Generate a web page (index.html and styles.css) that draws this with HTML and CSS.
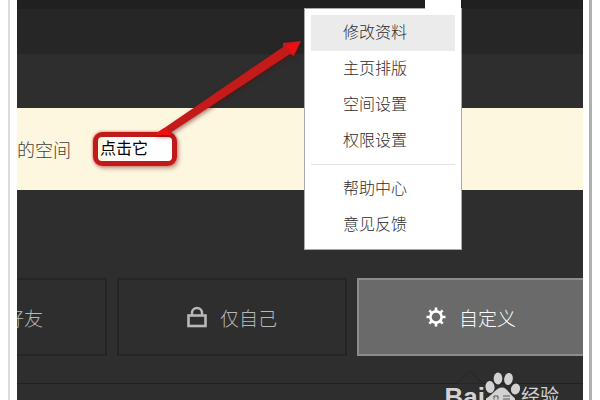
FILE: index.html
```html
<!DOCTYPE html>
<html lang="zh-CN">
	<head>
		<meta charset="utf-8">
		<title>空间设置</title>
		<link rel="stylesheet" href="styles.css">
	</head>
	<body>
		<div class="frame">
			<div class="screen">
				<div class="topbar"></div>
				<div class="navbar"></div>
				<div class="banner"></div>
				<div class="notice">
					<span class="notice-text">的空间</span>
					<span class="callout">点击它</span>
				</div>
				<div class="tiles">
					<button class="tile tile-friend" type="button">好友</button>
					<button class="tile" type="button">
						<svg class="icon" viewBox="0 0 20 22" width="20" height="22">
							<path d="M5 10V7a5 5 0 0 1 10 0v3" fill="none" stroke="currentColor" stroke-width="2.4"/>
							<rect x="1.5" y="9.5" width="17" height="10.5" fill="none" stroke="currentColor" stroke-width="2.6"/>
						</svg>
						仅自己
					</button>
					<button class="tile current" type="button">
						<svg class="icon" viewBox="0 0 20 22" width="20" height="22">
							<circle cx="10" cy="11" r="5.6" fill="none" stroke="currentColor" stroke-width="2.6"/>
							<path d="M10 1.5v4M10 16.5v4M.5 11h4M15.5 11h4M3.3 4.3l3 3M13.7 14.7l3 3M3.3 17.7l3-3M13.7 7.3l3-3" stroke="currentColor" stroke-width="2.6"/>
						</svg>
						自定义
					</button>
				</div>
				<div class="panel">
					<svg class="caret" viewBox="0 0 26 14" width="26" height="14">
						<path d="M0 13.5L13 1l13 12.5" fill="#2e2e2e" stroke="#252525"/>
					</svg>
				</div>

				<div class="menu-tab"></div>
				<ul class="menu">
					<li><a class="current" href="#">修改资料</a></li>
					<li><a href="#">主页排版</a></li>
					<li><a href="#">空间设置</a></li>
					<li><a href="#">权限设置</a></li>
					<li class="line"></li>
					<li><a href="#">帮助中心</a></li>
					<li><a href="#">意见反馈</a></li>
				</ul>

				<!-- 箭头 -->
				<svg class="arrow" viewBox="0 0 160 110" width="160" height="110">
					<path d="M13 104L142 16L142 12L160 10L153 25L149 23L26 104Z" fill="#c41a1a"/>
					<path d="M145 14L159 11L152 23Z" fill="#ee1010"/>
					<path d="M13 104L23 97L31 104Z" fill="#ee1010"/>
				</svg>

				<div class="watermark">
					<span class="mark-bai">Bai</span>
					<svg class="paw" viewBox="0 0 36 30" width="36" height="30">
						<g fill="#d2d2d2">
							<ellipse cx="5" cy="17" rx="4.5" ry="6" transform="rotate(-8 5 17)"/>
							<ellipse cx="13" cy="8.5" rx="4.3" ry="6"/>
							<ellipse cx="23.5" cy="9" rx="4.3" ry="6" transform="rotate(10 23.5 9)"/>
							<ellipse cx="30.5" cy="19" rx="4.5" ry="5.5" transform="rotate(15 30.5 19)"/>
							<path d="M17 17.5c5 0 6 5 13 11v2H1v-2c6-3 10-11 16-11z"/>
						</g>
						<path d="M9 29.5V26h4v3.5M18 26h7M18 29h7" fill="none" stroke="#555"/>
					</svg>
					<span class="mark-exp">经验</span>
				</div>
			</div>
		</div>
	</body>
</html>
```
FILE: styles.css
```css
* {
	margin: 0;
	padding: 0;
	list-style: none;
	box-sizing: border-box;
}

body {
	background: #fff;
	font-family: "Liberation Sans", "Noto Sans CJK SC", sans-serif;
	overflow: hidden;
}

.frame {
	height: 100vh;
	margin: 0 8px;
	padding: 0 6px 0 7px;
	border-left: 2px solid #dcdcdc;
	border-right: 3px solid #b0b0b0;
}

.screen {
	position: relative;
	height: 100%;
	overflow: hidden;
	background: #2e2e2e;
}

.topbar {
	height: 9px;
	background: #202020;
}

.navbar {
	height: 45px;
	background: #262626;
}

.banner {
	height: 54px;
	background: #2e2e2e;
}

.notice {
	display: flex;
	align-items: center;
	gap: 22px;
	height: 82px;
	background: #fef7e0;
	color: #44423a;
	font-size: 18px;
	font-weight: 300;
}

.callout {
	width: 84px;
	height: 34px;
	border: 5px solid #c01a1a;
	border-radius: 9px;
	background: linear-gradient(to right, #fdf6df, #fff 30%);
	box-shadow: 0 0 3px #e05050, 2px 3px 4px rgba(120, 80, 60, 0.4);
	color: #000;
	font-size: 16px;
	font-weight: 400;
	line-height: 24px;
	padding-left: 2px;
}

/* 权限选项 */
.tiles {
	display: grid;
	grid-template-columns: 90px 230px 1fr;
	gap: 10px;
	margin-top: 88px;
}

.tile {
	display: flex;
	align-items: center;
	justify-content: center;
	gap: 13px;
	height: 78px;
	border: 2px solid #252525;
	background: #2e2e2e;
	color: #b8b8b8;
	font-family: inherit;
	font-size: 19px;
	font-weight: 300;
	white-space: nowrap;
	overflow: hidden;
}

.tile-friend {
	justify-content: flex-end;
	border-left: none;
	padding-right: 62px;
}

.tile.current {
	border-color: #8c8c8c;
	border-right: none;
	background: #6a6a6a;
	color: #fff;
}

.icon {
	flex: none;
}

.panel {
	position: relative;
	height: 17px;
	margin-top: 27px;
	border-top: 1px solid #202020;
}

.caret {
	position: absolute;
	left: 440px;
	bottom: 100%;
}

/* 下拉菜单 */
.menu-tab {
	position: absolute;
	top: 0;
	right: 122px;
	width: 36px;
	height: 9px;
	background: #fff;
	z-index: 2;
}

.menu {
	position: absolute;
	top: 8px;
	right: 121px;
	width: 158px;
	padding: 6px;
	border: 1px solid #a8a8a8;
	background: #fff;
	z-index: 1;
}

.menu a {
	display: block;
	padding-left: 32px;
	line-height: 36px;
	font-size: 16px;
	font-weight: 300;
	color: #2c2c2c;
	text-decoration: none;
}

.menu a.current {
	background: #ebebeb;
}

.menu .line {
	height: 1px;
	margin: 5px 0 6px;
	background: #e2e2e2;
}

.arrow {
	position: absolute;
	left: 124px;
	top: 31px;
	filter: drop-shadow(1px 2px 2px rgba(90, 10, 10, 0.5));
}

/* 水印 */
.watermark {
	position: absolute;
	right: 24px;
	bottom: 0;
	display: flex;
	align-items: flex-start;
	height: 30px;
	color: #d2d2d2;
	overflow: hidden;
}

.mark-bai {
	padding-top: 12px;
	font-size: 26px;
	font-weight: bold;
	line-height: 30px;
}

.mark-exp {
	padding-top: 12px;
	font-size: 19px;
	line-height: 30px;
}
```
